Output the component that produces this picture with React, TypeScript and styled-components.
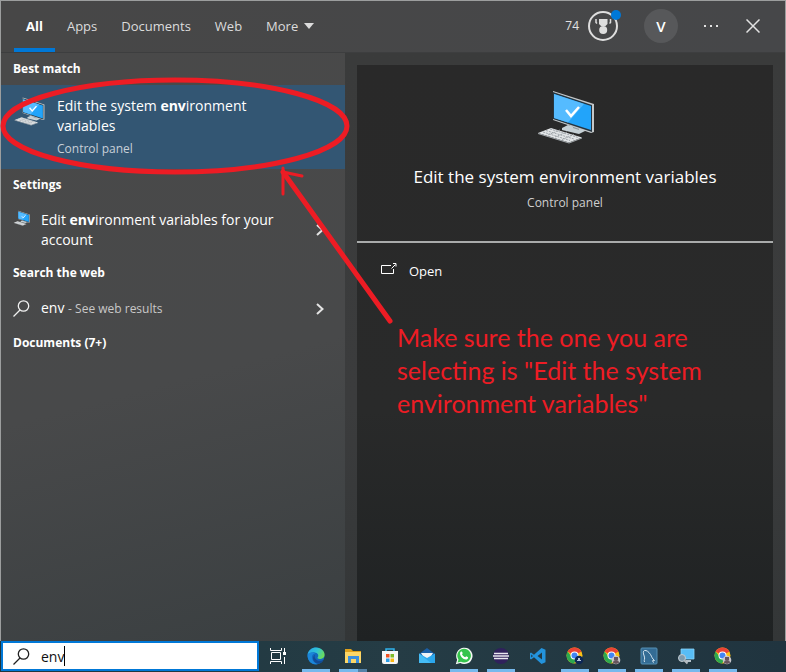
import React from "react";
import styled, { createGlobalStyle, css } from "styled-components";

const red = "#ed1c24";
const accent = "#0078d7";

const GlobalStyle = createGlobalStyle`
  *, *::before, *::after { box-sizing: border-box; }
  body { margin: 0; background: #9c9e9e; }
  body, button, input { font-family: "Open Sans", "Noto Sans", sans-serif; }
  button { border: 0; background: none; color: inherit; padding: 0; margin: 0; text-align: left; }
  h1, h2, p { margin: 0; font-weight: 400; }
  svg { display: block; flex: none; }
`;

const Screen = styled.div`
  position: relative;
  display: flex;
  flex-direction: column;
  min-height: 100vh;
  overflow: hidden;
`;

const Panel = styled.main`
  flex: 1;
  display: flex;
  flex-direction: column;
  border: 1px solid #9c9e9e;
  border-bottom: 0;
  color: #fff;
`;

const Header = styled.header`
  display: flex;
  justify-content: space-between;
  height: 52px;
  background: linear-gradient(90deg, #474747, #464749);
  border-bottom: 1px solid #3d3e3f;
`;

const Tabs = styled.nav`
  display: flex;
  padding-left: 13px;
`;

const Tab = styled.button<{ $active?: boolean }>`
  display: flex;
  align-items: center;
  gap: 6px;
  padding: 0 12px 2px;
  font-size: 13px;
  color: #dcdcdc;
  border-top: 4px solid transparent;
  border-bottom: 4px solid transparent;
  ${(p) => p.$active && css`
    color: #fff;
    font-weight: 700;
    border-bottom-color: ${accent};
  `}
`;

const Tools = styled.div`
  display: flex;
  align-items: center;
  padding: 0 25px 2px 0;
  color: #e2e2e2;
`;

const Rewards = styled.button`
  display: flex;
  align-items: center;
  gap: 8px;
  font-size: 12px;
`;

const Avatar = styled.button`
  width: 34px;
  height: 34px;
  margin: 0 25px 0 23px;
  border-radius: 50%;
  background: #57585a;
  color: #fff;
  font-size: 15px;
  font-weight: 600;
  text-align: center;
`;

const ToolButton = styled.button`
  & + & { margin-left: 27px; }
`;

const Columns = styled.div`
  flex: 1;
  display: grid;
  grid-template-columns: 344px 1fr;
`;

const Results = styled.section`
  background: linear-gradient(165deg, #494949 0%, #48494a 55%, #3a3f41 100%);
`;

const GroupTitle = styled.h2`
  padding: 6px 12px;
  font-size: 12px;
  line-height: 20px;
  font-weight: 700;
`;

const BestMatch = styled.button`
  display: flex;
  gap: 12px;
  width: 100%;
  padding: 11px 72px 10px 12px;
  background: #335673;
`;

const Title = styled.span`
  display: block;
  font-size: 14px;
  line-height: 20px;
  b { font-weight: 700; }
`;

const Caption = styled.span`
  display: block;
  padding-top: 3px;
  font-size: 12px;
  line-height: 20px;
  color: #c8d0d8;
`;

const ResultRow = styled.button<{ $tall?: boolean }>`
  display: flex;
  align-items: ${(p) => (p.$tall ? "flex-start" : "center")};
  gap: 11px;
  width: 100%;
  padding: ${(p) => (p.$tall ? "9px 21px 7px 12px" : "9px 21px 8px 12px")};
  > span { flex: 1; }
  > svg:last-child { align-self: center; }
`;

const Hint = styled.small`
  font-size: 12px;
  color: #c8c8c8;
`;

const Preview = styled.section`
  display: flex;
  padding: 12px 12px 0;
  background: linear-gradient(180deg, #3a3b3b, #3b3c3d 60%, #333637);
`;

const Card = styled.article`
  flex: 1;
  background: linear-gradient(180deg, #292929 0%, #292a2a 60%, #1f2223 100%);
`;

const Summary = styled.div`
  display: flex;
  flex-direction: column;
  align-items: center;
  height: 178px;
  padding-top: 23px;
  border-bottom: 2px solid #a9abab;
`;

const PreviewTitle = styled.h1`
  margin-top: 16px;
  font-size: 17px;
  line-height: 26px;
`;

const PreviewKind = styled.p`
  margin-top: 3px;
  font-size: 12px;
  line-height: 20px;
  color: #cfcfcf;
`;

const OpenAction = styled.button`
  display: flex;
  align-items: center;
  gap: 12px;
  width: 100%;
  padding: 18px 24px;
  font-size: 13px;
  line-height: 20px;
  svg { margin-bottom: 4px; }
`;

const Taskbar = styled.footer`
  display: flex;
  height: 31px;
  background: linear-gradient(90deg, #1f373f, #253c45 50%, #20343f);
`;

const SearchBox = styled.label`
  display: flex;
  align-items: center;
  width: 258px;
  height: 30px;
  margin: 0 1px 1px 1px;
  padding-left: 10px;
  background: #fff;
  border: 2px solid ${accent};
`;

const SearchInput = styled.input`
  field-sizing: content;
  margin-left: 11px;
  padding: 0;
  border: 0;
  outline: 0;
  background: none;
  color: #111;
  font-size: 14px;
`;

const Caret = styled.span`
  width: 1px;
  height: 20px;
  background: #000;
`;

const TaskButton = styled.button<{ $line?: "single" | "stacked" }>`
  display: flex;
  flex-direction: column;
  align-items: center;
  justify-content: flex-end;
  gap: 4px;
  width: 37px;
  &::after {
    content: "";
    width: 28px;
    height: 3px;
    background: ${(p) =>
      p.$line === "single"
        ? "#76b9ed"
        : p.$line === "stacked"
          ? "linear-gradient(90deg, #76b9ed 19px, #5482a8 19px)"
          : "transparent"};
  }
`;

const Markup = styled.svg`
  position: absolute;
  left: 0;
  top: 0;
  pointer-events: none;
`;

const Note = styled.p`
  position: absolute;
  left: 397px;
  top: 321px;
  width: 330px;
  color: ${red};
  font-family: Lato, "Open Sans", sans-serif;
  font-size: 25px;
  line-height: 33px;
`;

const Computer = ({ size }: { size: number }) => (
  <svg width={size} height={size} viewBox="0 0 60 60" aria-hidden="true">
    <path d="M27 40l6-3 19 5-8 4-17-4z" fill="#c5d0d5" />
    <path d="M38 36l6 2v4l-6-2z" fill="#8d989e" />
    <path d="M18 3l41 13v28l-3 1L18 32z" fill="#c4c8ca" />
    <path d="M18 4l39 13v27L18 31z" fill="#253540" />
    <path d="M19 6l37 12v24L19 30z" fill="#22a4fa" />
    <path d="M19 6l30 10L33 34.500 19 30z" fill="#55bbff" />
    <path d="M31 22l5 6 8-9" fill="none" stroke="#fff" strokeWidth="2.500" />
    <path d="M3 45l13-5 31 9.500-13 5z" fill="#e2e5e7" />
    <path d="M3 45l31 9.500 13-5v1l-13 5L3 46z" fill="#a4aaae" />
    <path d="M8 44l27 8.500M11 42.500l28 8.500M15 41l28 8.500M13 47l12-5M20 49l12-5M27 51.500l12-5" stroke="#9fa5aa" strokeWidth="1" strokeDasharray="2 1" />
  </svg>
);

const Magnifier = ({ color }: { color: string }) => (
  <svg width="17" height="17" viewBox="0 0 17 17" fill="none" stroke={color} strokeWidth="1.300" aria-hidden="true">
    <circle cx="10.500" cy="6" r="5.200" />
    <path d="M7 10L.5 16.500" />
  </svg>
);

const Chevron = () => (
  <svg width="8" height="12" viewBox="0 0 8 12" fill="none" stroke="#e4e4e4" strokeWidth="2" aria-hidden="true">
    <path d="M1 1l5.500 5L1 11" />
  </svg>
);

const Medal = () => (
  <svg width="34" height="34" viewBox="0 0 34 34" aria-hidden="true">
    <circle cx="16" cy="17" r="14" fill="none" stroke="#dedede" strokeWidth="2" />
    <path d="M12 10h8.500v5l-2 2h-4.500l-2-2z" fill="#dedede" />
    <circle cx="16.200" cy="21" r="4" fill="#dedede" />
    <path d="M9 10v3.500l1 1M23.500 10v3.500l-1 1" fill="none" stroke="#dedede" strokeWidth="1.500" />
    <circle cx="29" cy="6" r="5" fill={accent} />
  </svg>
);

const TaskView = () => (
  <svg width="17" height="18" viewBox="0 0 17 18" fill="none" stroke="#fff" aria-hidden="true">
    <path d="M1.500 5.500h9v7h-9zM.5 1v2.500h11V1M.5 17v-2.500h11V17M14.500 1v4M14.500 10v7" />
    <path d="M13 5h3v3h-3z" fill="#fff" stroke="none" />
  </svg>
);

const Edge = () => (
  <svg width="18" height="18" viewBox="0 0 18 18" aria-hidden="true">
    <defs>
      <linearGradient id="edgeTop" x1="0" x2="1" y1=".2" y2=".6">
        <stop stopColor="#2aa5e8" />
        <stop offset=".5" stopColor="#2fc3d6" />
        <stop offset="1" stopColor="#6fdd55" />
      </linearGradient>
    </defs>
    <circle cx="9" cy="9" r="8.500" fill="#1269bf" />
    <path d="M.5 8C1 3 5 .4 9 .4c5.500 0 8.700 4 8.600 7.300 0 3-2.600 4.300-5 4.300-1.600 0-2.400-.6-2-1.400 1.600-2.200.3-5-3-5.200C4.500 5.200 1.500 6 .5 8z" fill="url(#edgeTop)" />
    <path d="M.5 8c1.700-2.800 6-3 7.500-1.500C5.500 7 4.600 9 5 11c.5 3 3 5.500 6 6C6 18.500.5 15 .5 8z" fill="#1b86d9" />
    <path d="M8 7.500c-1.500 3 1.200 6.500 5 6.300 1.500 0 2.500-.5 3.500-1-1.500 3-4 4-5.500 4C6 16 4.500 10 8 7.500z" fill="#124b96" />
  </svg>
);

const Explorer = () => (
  <svg width="18" height="18" viewBox="0 0 18 18" aria-hidden="true">
    <path d="M1 2h6l2 2h8v4H1z" fill="#e0a11b" />
    <path d="M1 5h16v11H1z" fill="#fcd667" />
    <path d="M4 9h11v7h-3v-4H7v4H4z" fill="#3a8ede" />
  </svg>
);

const Store = () => (
  <svg width="18" height="18" viewBox="0 0 18 18" aria-hidden="true">
    <path d="M5 5V2h8v3" fill="none" stroke="#30b3ec" strokeWidth="1.500" />
    <path d="M1 4h16v11q0 2-2 2H3q-2 0-2-2z" fill="#f5f5f5" />
    <path d="M5 7h3.500v3.500H5z" fill="#f05122" />
    <path d="M9.500 7H13v3.500H9.500z" fill="#7eba28" />
    <path d="M5 11.500h3.500V15H5z" fill="#2c9fe8" />
    <path d="M9.500 11.500H13V15H9.500z" fill="#fab813" />
  </svg>
);

const Mail = () => (
  <svg width="18" height="18" viewBox="0 0 18 18" aria-hidden="true">
    <path d="M1 7l8-6 8 6v3H1z" fill="#1b5fa6" />
    <path d="M3 6h12l-3 5H6z" fill="#eef3f7" />
    <path d="M1 6.500L9 11l8-4.500V16H1z" fill="#2ba7ec" />
    <path d="M1 6.500L13 16H1z" fill="#45bcf5" />
  </svg>
);

const WhatsApp = () => (
  <svg width="18" height="18" viewBox="0 0 18 18" aria-hidden="true">
    <path d="M.8 17.300l1.300-4.600A8.200 8.200 0 1 1 5.300 16z" fill="#f4f8f4" />
    <path d="M2.600 15.500l.9-3A6.800 6.800 0 1 1 6 14.700z" fill="#35c44c" />
    <path d="M6 4.500c.7-.3 1 0 1.200.5l.5 1.300-.7 1c.7 1.500 1.700 2.300 3.200 3l1-1 1.900.9c.2 1.700-1.200 2.300-2.200 2.300C8 12.500 5 9 5 6.500c0-.9.400-1.600 1-2z" fill="#fff" />
  </svg>
);

const Eclipse = () => (
  <svg width="18" height="18" viewBox="0 0 18 18" aria-hidden="true">
    <circle cx="9" cy="9" r="8" fill="#30215c" />
    <path d="M2 6.500h14M1 9h16M2 11.500h14" stroke="#e9e7f0" strokeWidth="1.300" />
  </svg>
);

const Code = () => (
  <svg width="18" height="18" viewBox="0 0 18 18" aria-hidden="true">
    <path d="M12.500 1L5 7.800 2 5.500 1 6.200v5.600l1 .7 3-2.300 7.500 6.800 4-1.800V2.800zM13 5.500v7L8.500 9zM2.200 7.500L4 9l-1.800 1.500z" fill="#2393dc" fillRule="evenodd" />
  </svg>
);

const Chrome = ({ person }: { person?: boolean }) => (
  <svg width="18" height="18" viewBox="0 0 18 18" aria-hidden="true">
    <circle cx="8.500" cy="8.500" r="8" fill="#fbc116" />
    <path d="M8.500 8.500L1.600 4.500A8 8 0 0 1 15.400 4.500z" fill="#ea4335" />
    <path d="M1.600 4.500A8 8 0 0 0 8 16.500l4-6.500-3.500-1.500-3 1z" fill="#2da94f" />
    <circle cx="8.500" cy="8.500" r="4" fill="#fff" />
    <circle cx="8.500" cy="8.500" r="3" fill="#4285f4" />
    <circle cx="13" cy="13" r="4.300" fill={person ? "#c9c6cb" : "#0e2855"} />
    {person ? (
      <path d="M10 16q0-3 3-3t3 3l-3 1zM11 10h4v3h-4z" fill="#67545d" />
    ) : (
      <path d="M11 14h4v-1h-1v-2h-2v2h-1z" fill="#b8c4d8" />
    )}
  </svg>
);

const Workbench = () => (
  <svg width="18" height="18" viewBox="0 0 18 18" aria-hidden="true">
    <rect x="1" y="1" width="16" height="16" rx="1" fill="#346c94" stroke="#5590b5" />
    <path d="M4.500 15c-1-2 1-3-.3-6C3 6 3 4 4.500 3.500c2-.3 4 1 6 4 1.500 2.500 1.500 4 4 6l-2 .2 1 2" fill="none" stroke="#d4e4ee" />
  </svg>
);

const RemoteSearch = () => (
  <svg width="18" height="18" viewBox="0 0 18 18" aria-hidden="true">
    <path d="M4 2h13v10H4z" fill="#58bdf5" stroke="#8bd4fa" strokeWidth=".8" />
    <path d="M9 13h5v2H9z" fill="#b4c0c8" />
    <circle cx="5" cy="11" r="3.500" fill="#7f9bad" stroke="#c3ccd2" />
    <path d="M7.500 13.500l3 3" stroke="#b5bbc0" strokeWidth="2" />
  </svg>
);

const apps: { name: string; icon: React.ReactNode; line?: "single" | "stacked" }[] = [
  { name: "Microsoft Edge", icon: <Edge />, line: "single" },
  { name: "File Explorer", icon: <Explorer />, line: "stacked" },
  { name: "Microsoft Store", icon: <Store /> },
  { name: "Mail", icon: <Mail /> },
  { name: "WhatsApp", icon: <WhatsApp />, line: "single" },
  { name: "Eclipse", icon: <Eclipse />, line: "single" },
  { name: "Visual Studio Code", icon: <Code /> },
  { name: "Chrome, work", icon: <Chrome />, line: "single" },
  { name: "Chrome, personal", icon: <Chrome person />, line: "single" },
  { name: "MySQL Workbench", icon: <Workbench />, line: "single" },
  { name: "Remote search", icon: <RemoteSearch />, line: "single" },
  { name: "Chrome, guest", icon: <Chrome person />, line: "single" },
];

export default function App() {
  return (
    <Screen>
      <GlobalStyle />
      <Panel>
        <Header>
          <Tabs>
            <Tab $active>All</Tab>
            <Tab>Apps</Tab>
            <Tab>Documents</Tab>
            <Tab>Web</Tab>
            <Tab>
              More
              <svg width="10" height="6" viewBox="0 0 10 6" fill="#dcdcdc" aria-hidden="true">
                <path d="M0 0h10L5 6z" />
              </svg>
            </Tab>
          </Tabs>
          <Tools>
            <Rewards>
              74
              <Medal />
            </Rewards>
            <Avatar>V</Avatar>
            <ToolButton aria-label="Options">
              <svg width="16" height="16" viewBox="0 0 16 16" fill="#e2e2e2" aria-hidden="true">
                <path d="M1 7h2v2H1zM7 7h2v2H7zM13 7h2v2h-2z" />
              </svg>
            </ToolButton>
            <ToolButton aria-label="Close">
              <svg width="14" height="14" viewBox="0 0 14 14" stroke="#e2e2e2" strokeWidth="1.500" aria-hidden="true">
                <path d="M.5.5l13 13M13.500.5l-13 13" />
              </svg>
            </ToolButton>
          </Tools>
        </Header>
        <Columns>
          <Results>
            <GroupTitle>Best match</GroupTitle>
            <BestMatch>
              <Computer size={32} />
              <span>
                <Title>Edit the system <b>env</b>ironment variables</Title>
                <Caption>Control panel</Caption>
              </span>
            </BestMatch>
            <GroupTitle>Settings</GroupTitle>
            <ResultRow $tall>
              <Computer size={17} />
              <Title>Edit <b>env</b>ironment variables for your account</Title>
              <Chevron />
            </ResultRow>
            <GroupTitle>Search the web</GroupTitle>
            <ResultRow>
              <Magnifier color="#f0f0f0" />
              <Title>env <Hint>- See web results</Hint></Title>
              <Chevron />
            </ResultRow>
            <GroupTitle>Documents (7+)</GroupTitle>
          </Results>
          <Preview>
            <Card>
              <Summary>
                <Computer size={60} />
                <PreviewTitle>Edit the system environment variables</PreviewTitle>
                <PreviewKind>Control panel</PreviewKind>
              </Summary>
              <OpenAction>
                <svg width="16" height="12" viewBox="0 0 16 12" fill="none" stroke="#fff" aria-hidden="true">
                  <path d="M10 2.500H.5v8h12V6M10.500 5.500l4-4M12 .5h3v3" />
                </svg>
                Open
              </OpenAction>
            </Card>
          </Preview>
        </Columns>
      </Panel>
      <Taskbar>
        <SearchBox>
          <Magnifier color="#222" />
          <SearchInput aria-label="Search" defaultValue="env" />
          <Caret />
        </SearchBox>
        <TaskButton aria-label="Task View">
          <TaskView />
        </TaskButton>
        {apps.map((app) => (
          <TaskButton key={app.name} aria-label={app.name} $line={app.line}>
            {app.icon}
          </TaskButton>
        ))}
      </Taskbar>
      <Markup width="400" height="340" viewBox="0 0 400 340" fill="none" stroke={red} strokeLinecap="round" aria-hidden="true">
        <ellipse cx="175" cy="126" rx="172" ry="46" strokeWidth="5" />
        <path d="M283 172l107 149" strokeWidth="5" />
        <path d="M283 168v26M283 172l19 4" strokeWidth="3" />
      </Markup>
      <Note>Make sure the one you are selecting is "Edit the system environment variables"</Note>
    </Screen>
  );
}
